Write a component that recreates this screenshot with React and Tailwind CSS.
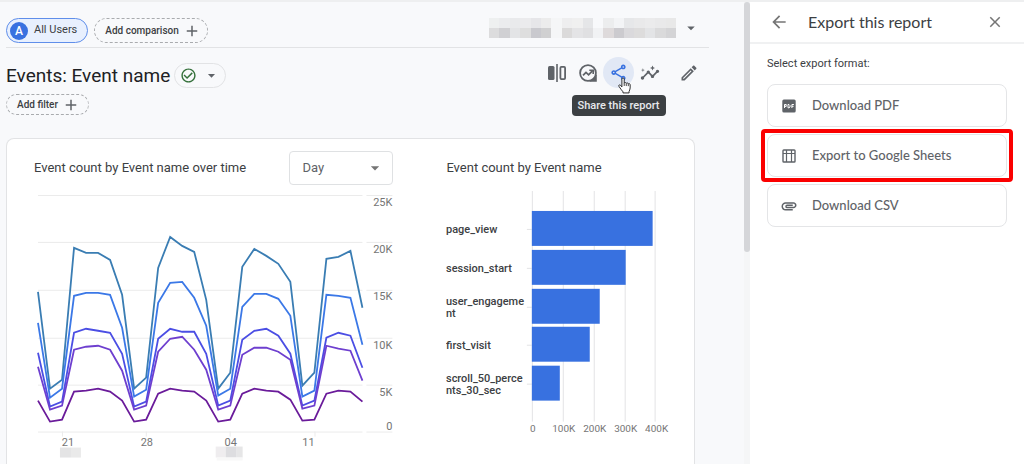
import React from "react";
import {
  MdAdd,
  MdArrowBack,
  MdArrowDropDown,
  MdAttachment,
  MdCheckCircleOutline,
  MdClose,
  MdInsights,
  MdOutlineEdit,
  MdOutlineShare,
} from "react-icons/md";

const SERIES = [
  { color: "#3a7db3", y: [292, 389, 380, 248, 253, 253, 260, 295, 389, 378, 268, 237, 246, 252, 300, 389, 373, 267, 249, 256, 264, 282, 386, 373, 259, 257, 251, 308] },
  { color: "#3b78e7", y: [323, 398, 389, 296, 293, 293, 295, 328, 397, 390, 303, 283, 282, 298, 326, 396, 389, 307, 294, 294, 299, 316, 397, 391, 295, 296, 298, 345] },
  { color: "#4b4ee4", y: [353, 407, 402, 333, 329, 331, 333, 354, 407, 402, 339, 329, 332, 332, 354, 406, 401, 340, 331, 329, 336, 354, 406, 401, 338, 333, 336, 368] },
  { color: "#6e3fcf", y: [367, 410, 406, 350, 347, 346, 350, 371, 410, 406, 352, 339, 337, 350, 370, 410, 406, 355, 348, 348, 352, 360, 409, 406, 346, 349, 351, 381] },
  { color: "#6a1b9a", y: [401, 422, 420, 392, 391, 389, 392, 401, 422, 420, 394, 389, 391, 392, 401, 422, 420, 394, 389, 391, 392, 400, 421, 420, 394, 391, 392, 402] },
];

const Y_TICKS = [
  { label: "25K", y: 195, text: 206 },
  { label: "20K", y: 242, text: 253 },
  { label: "15K", y: 290, text: 300 },
  { label: "10K", y: 338, text: 349 },
  { label: "5K", y: 385, text: 396 },
  { label: "0", y: 432, text: 430 },
];

const X_TICKS = [
  { label: "21", x: 62, text: 68 },
  { label: "28", x: 146, text: 147 },
  { label: "04", x: 230, text: 231 },
  { label: "11", x: 315, text: 309 },
];

const BARS = [
  { lines: ["page_view"], end: 653 },
  { lines: ["session_start"], end: 626 },
  { lines: ["user_engageme", "nt"], end: 600 },
  { lines: ["first_visit"], end: 590 },
  { lines: ["scroll_50_perce", "nts_30_sec"], end: 560 },
];

const MASK = [
  ["bg-[#eef0f0]", "bg-[#dcdcdd]"], ["bg-[#ebecee]", "bg-[#d0d0d3]"], ["bg-[#e9eaec]", "bg-[#e3e4e6]"],
  ["bg-[#ebebed]", "bg-[#dedede]"], ["bg-[#e6e6e9]", "bg-[#c9c9ce]"], ["bg-[#ececec]", "bg-[#d0d0d1]"],
  ["bg-[#f5f6f7]", "bg-[#f5f6f7]"], ["bg-[#eeeeef]", "bg-[#dbdada]"], ["bg-[#f0f0f0]", "bg-[#e4e4e6]"],
  ["bg-[#e5e6e8]", "bg-[#e0e0e2]"], ["bg-[#f8f9fb]", "bg-[#f1f2f4]"], ["bg-[#ecedee]", "bg-[#dedadb]"],
  ["bg-[#f3f4f6]", "bg-[#cccbcf]"], ["bg-[#e6e7e9]", "bg-[#dad9dc]"], ["bg-[#e9e9ea]", "bg-[#dddcdc]"],
  ["bg-[#ebebec]", "bg-[#e3e4e6]"], ["bg-[#e9e9ea]", "bg-[#dadadb]"], ["bg-[#e8e8e8]", "bg-[#d4d4d6]"],
];

function CompareIcon() {
  return (
    <svg viewBox="0 0 20 20" className="size-5" fill="none" stroke="currentColor" aria-hidden="true">
      <rect x="1" y="3" width="6.500" height="14" rx="1.500" fill="currentColor" stroke="none" />
      <path d="M10 1v18" strokeWidth="1.600" />
      <rect x="13.400" y="3.900" width="4.700" height="12.200" rx="1" strokeWidth="1.800" />
    </svg>
  );
}

function InsightBubbleIcon() {
  return (
    <svg viewBox="0 0 20 20" className="size-5" fill="none" stroke="currentColor" aria-hidden="true">
      <circle cx="10" cy="10" r="7.900" strokeWidth="1.800" />
      <path d="M18.800 11v7.800H11l3-2 2.800-2.800z" fill="currentColor" stroke="none" />
      <path d="M5 12.400l3-3 2.600 2.400 3.800-3.900" strokeWidth="1.800" />
      <path d="M11.300 7.200h3.900v3.900" strokeWidth="1.600" />
    </svg>
  );
}

function PdfIcon() {
  return (
    <svg viewBox="0 0 14 14" className="size-3.5" aria-hidden="true">
      <rect x="0.300" y="0.500" width="13.400" height="13" rx="1.500" fill="#5f6368" />
      <g fill="none" stroke="#fff" strokeWidth="1">
        <path d="M2.500 9V5.500h1.700v1.900H2.500" />
        <path d="M6 5.500h1l1 1v1.500l-1 .8H6z" />
        <path d="M9.900 9V5.500h2M9.900 7.300h1.700" />
      </g>
    </svg>
  );
}

function SheetIcon() {
  return (
    <svg viewBox="0 0 14 14" className="size-3.5" fill="none" stroke="#5f6368" strokeWidth="1.400" aria-hidden="true">
      <rect x="1" y="1" width="12" height="12" rx="0.800" />
      <path d="M1 4.500h12M4.500 1v12M9.500 1v12" strokeWidth="1.200" />
    </svg>
  );
}

function HandCursor() {
  return (
    <svg viewBox="0 0 14 18" className="pointer-events-none absolute left-[15px] top-5 z-20 h-[17px] w-[13px]" aria-hidden="true">
      <path
        d="M4.200 10.500V2.200c0-1.800 2.500-1.800 2.500 0v4.300c.4-1 2-.8 2.200.2.600-.8 2-.5 2.200.5.700-.5 2-.2 2 1v3.400c0 1.800-.9 2.700-1.200 4v1.400H5.400v-1.200C4 14 2.400 12.300 1 9.900c-.7-1.300.8-2.200 1.700-1.200z"
        fill="#fff" stroke="#222" strokeWidth="1"
      />
      <path d="M6.700 6.500v3M8.900 7v2.600M11.100 7.500v2.200" stroke="#222" strokeWidth="0.900" fill="none" />
    </svg>
  );
}

function LineChart() {
  return (
    <svg viewBox="34 188 360 276" className="block w-full" role="img" aria-label="Event count by Event name over time">
      <g stroke="#ebebeb" strokeWidth="1">
        {Y_TICKS.map((t) => (
          <path key={t.label} d={`M38 ${t.y + 0.5}H363M367 ${t.y + 0.5}H393`} />
        ))}
        {X_TICKS.map((t) => (
          <path key={t.label} d={`M${t.x + 0.5} 432v5`} />
        ))}
      </g>
      {SERIES.map((s) => (
        <polyline
          key={s.color}
          fill="none"
          stroke={s.color}
          strokeWidth="1.800"
          points={s.y.map((y, i) => `${38 + (i * 325) / 27},${y}`).join(" ")}
        />
      ))}
      <g className="fill-[#757575] font-[Roboto,sans-serif] text-[11px]">
        {Y_TICKS.map((t) => (
          <text key={t.label} x="393" y={t.text} textAnchor="end">{t.label}</text>
        ))}
        {X_TICKS.map((t) => (
          <text key={t.label} x={t.text} y="446" textAnchor="middle">{t.label}</text>
        ))}
      </g>
      <rect x="60" y="448" width="11" height="10" fill="#e4e4e5" />
      <rect x="71" y="448" width="10" height="10" fill="#eaeaea" />
      <rect x="216" y="447" width="10" height="11" fill="#efedef" />
      <rect x="226" y="447" width="11" height="11" fill="#dddde0" />
      <rect x="237" y="447" width="6" height="11" fill="#e6e6e7" />
      <rect x="217" y="458" width="26" height="3" fill="#f8f8f8" />
    </svg>
  );
}

function BarChart() {
  return (
    <svg viewBox="446 188 226 276" className="block w-full" role="img" aria-label="Event count by Event name">
      <g stroke="#e3e3e5" strokeWidth="1">
        {[532, 563, 594, 625, 655].map((x) => (
          <path key={x} d={`M${x + 0.5} 191V422`} />
        ))}
      </g>
      {BARS.map((b, i) => {
        const top = 211 + Math.round(i * 38.75);
        const mid = top + 18;
        return (
          <g key={b.lines[0]}>
            <path d={`M527 ${mid + 0.5}h5`} stroke="#e3e3e5" />
            <rect x="532" y={top} width={b.end - 532} height="35" fill="#3871e0" />
            <text className="fill-[#3c4043] font-[Roboto,sans-serif] text-[11px] font-medium">
              {b.lines.map((line, n) => (
                <tspan key={line} x="446" y={mid + 4 + n * 12 - (b.lines.length - 1) * 6}>{line}</tspan>
              ))}
            </text>
          </g>
        );
      })}
      <g className="fill-[#757575] font-[Roboto,sans-serif] text-[10px]">
        {["0", "100K", "200K", "300K", "400K"].map((label, i) => (
          <text key={label} x={533 + i * 31} y="432" textAnchor="middle">{label}</text>
        ))}
      </g>
    </svg>
  );
}

function ExportButton({ icon, children }) {
  return (
    <button type="button" className="flex h-[43px] w-full items-center gap-4 rounded-lg border border-[#e4e5e7] bg-white px-3.5 text-left font-[Lato,sans-serif] text-[13px] font-medium text-[#5f6368]">
      <span className="flex w-3.5 justify-center text-[#5f6368]">{icon}</span>
      {children}
    </button>
  );
}

export default function App() {
  return (
    <div className="flex h-screen flex-col overflow-hidden border-t-2 border-[#eeeff0] bg-[#f8f9fb] font-[Roboto,sans-serif] text-[#202124]">
      <div className="flex min-h-0 flex-1">
        <main className="flex min-w-0 flex-1 flex-col pl-1.5">
          <div className="mr-[35px] flex items-start justify-between border-b border-[#e2e3e5] pb-1 pt-4">
            <div className="flex gap-1.5">
              <button type="button" className="flex h-[25px] items-center gap-1.5 rounded-full border border-[#5f8eea] bg-[#e8f0fe] pl-[3px] pr-2.5 text-[11px] text-[#3c4043]">
                <span className="flex size-[18px] items-center justify-center rounded-full bg-[#3871e0] text-[12px] font-medium text-white">A</span>
                All Users
              </button>
              <button type="button" className="flex h-[25px] items-center gap-1 rounded-full border border-dashed border-[#a9abae] pl-2.5 pr-1.5 text-[10px] font-medium text-[#3c4043]">
                Add comparison
                <MdAdd className="size-[18px] text-[#5f6368]" />
              </button>
            </div>
            <button type="button" aria-label="Choose property" className="mr-[9px] flex items-center gap-1.5">
              <span className="grid w-[187px] grid-cols-[repeat(18,minmax(0,1fr))]">
                {MASK.map(([top, bottom], i) => (
                  <span key={i} className="flex flex-col">
                    <span className={`h-2.5 ${top}`} />
                    <span className={`h-2.5 ${bottom}`} />
                  </span>
                ))}
              </span>
              <MdArrowDropDown className="size-[18px] text-[#5f6368]" />
            </button>
          </div>

          <div className="mr-10 flex items-start justify-between pt-[15px]">
            <div>
              <div className="flex items-center gap-1">
                <h1 className="text-[19px] leading-6">Events: Event name</h1>
                <button type="button" aria-label="Report status" className="flex h-[25px] items-center gap-1.5 rounded-full border border-[#e2e3e5] pl-[5px] pr-[5px]">
                  <MdCheckCircleOutline className="size-[17px] text-[#34703a]" />
                  <MdArrowDropDown className="size-[17px] text-[#5f6368]" />
                </button>
              </div>
              <button type="button" className="mt-1.5 flex h-[21px] items-center gap-1 rounded-full border border-dashed border-[#a9abae] pl-2.5 pr-2 text-[10px] font-medium text-[#3c4043]">
                Add filter
                <MdAdd className="size-[18px] text-[#5f6368]" />
              </button>
            </div>
            <div className="-mt-1.5 flex items-center text-[#5f6368]">
              <button type="button" aria-label="Edit comparisons" className="flex size-[31px] items-center justify-center"><CompareIcon /></button>
              <button type="button" aria-label="Report insights" className="flex size-[31px] items-center justify-center"><InsightBubbleIcon /></button>
              <div className="relative">
                <button type="button" aria-label="Share this report" className="flex size-[31px] items-center justify-center rounded-full bg-[#e1e8f5] text-[#3871e0]">
                  <MdOutlineShare className="size-[19px]" />
                </button>
                <HandCursor />
                <span role="tooltip" className="absolute left-1/2 top-[38px] z-10 -translate-x-1/2 whitespace-nowrap rounded bg-[#3c4043] px-1.5 text-[11px] font-medium leading-[21px] text-[#e8eaed]">
                  Share this report
                </span>
              </div>
              <button type="button" aria-label="Insights" className="flex size-[31px] items-center justify-center"><MdInsights className="size-5" /></button>
              <button type="button" aria-label="Customize report" className="ml-2 flex size-[31px] items-center justify-center"><MdOutlineEdit className="size-5" /></button>
            </div>
          </div>

          <section className="mr-[49px] mt-[23px] flex min-h-0 flex-1 gap-[53px] overflow-hidden rounded-t-lg border border-b-0 border-[#e2e3e5] bg-white pl-[27px] pr-[22px] pt-3">
            <div className="min-w-0 flex-[360]">
              <div className="flex h-[37px] items-start justify-between">
                <h2 className="text-[13px] leading-[34px] text-[#3c4043]">Event count by Event name over time</h2>
                <div className="relative flex items-center">
                  <select aria-label="Interval" className="h-[34px] w-[104px] appearance-none rounded border border-[#dfe1e3] bg-white pl-3 text-[13px] text-[#5f6368]">
                    <option>Day</option>
                  </select>
                  <MdArrowDropDown className="pointer-events-none absolute right-2 size-5 text-[#757575]" />
                </div>
              </div>
              <LineChart />
            </div>
            <div className="min-w-0 flex-[226]">
              <h2 className="h-[37px] text-[13px] leading-[34px] text-[#3c4043]">Event count by Event name</h2>
              <BarChart />
            </div>
          </section>
        </main>

        <div className="w-1.5 shrink-0 bg-[#f5f6f7]">
          <div className="h-[250px] rounded-full bg-[#d5d6d9]" />
        </div>

        <aside className="w-[274px] shrink-0 bg-white">
          <header className="flex h-[42px] items-center border-b-2 border-[#f0f1f2] pl-[19px] pr-5">
            <button type="button" aria-label="Back" className="text-[#757575]"><MdArrowBack className="size-5" /></button>
            <h2 className="ml-[19px] flex-1 font-[Lato,sans-serif] text-[16px] text-[#3c4043]">Export this report</h2>
            <button type="button" aria-label="Close" className="text-[#757575]"><MdClose className="size-[18px]" /></button>
          </header>
          <div className="px-[17px] pt-3">
            <p className="text-[11px] leading-4 text-[#3c4043]">Select export format:</p>
            <div className="mt-3 flex flex-col gap-[7px]">
              <ExportButton icon={<PdfIcon />}>Download PDF</ExportButton>
              <div className="relative">
                <ExportButton icon={<SheetIcon />}>Export to Google Sheets</ExportButton>
                <div className="pointer-events-none absolute -inset-x-1.5 -inset-y-[5px] rounded-sm border-4 border-[#fb0000]" />
              </div>
              <ExportButton icon={<MdAttachment className="size-[18px] shrink-0" />}>Download CSV</ExportButton>
            </div>
          </div>
        </aside>
      </div>
    </div>
  );
}
